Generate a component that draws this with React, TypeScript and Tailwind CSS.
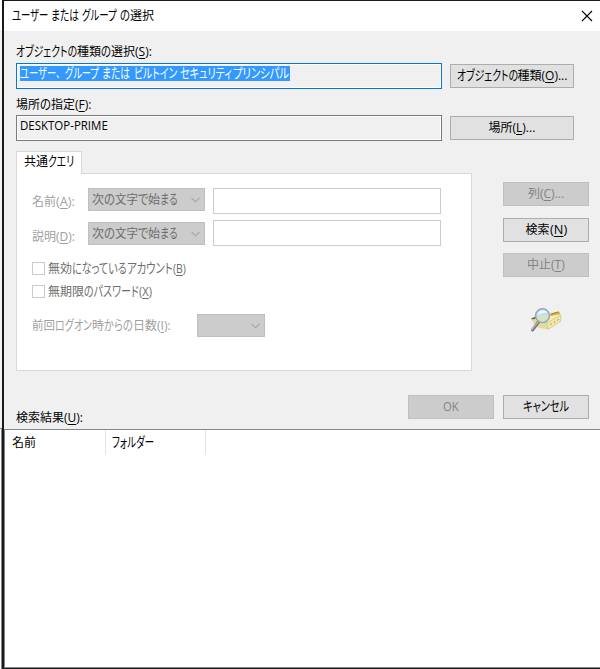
import { ReactNode, useLayoutEffect, useRef, useState } from "react";
import clsx from "clsx";

// a run of text squeezed to a fixed width, like the narrow kana of the Windows UI font
const Run = ({ w, className, children }: { w: number; className?: string; children: ReactNode }) => {
  const ref = useRef<HTMLSpanElement>(null);
  const [scale, setScale] = useState(1);

  useLayoutEffect(() => {
    if (ref.current) setScale(w / ref.current.offsetWidth);
  }, [w]);

  return (
    <span className="block h-4 shrink-0 whitespace-nowrap" style={{ width: w }}>
      <span ref={ref} className={clsx("block w-max origin-left", className ?? "leading-4")} style={{ transform: `scaleX(${scale})` }}>
        {children}
      </span>
    </span>
  );
};

type Part = [string, number];
type Key = [string, string, string, number];

const isKana = (text: string) => /^[ぁ-ヿ]+$/.test(text);

// parts are [text, width]; an empty text is a gap
const Text = ({ parts, accel, className }: { parts: Part[]; accel?: Key; className?: string }) => (
  <span className={clsx("flex h-4 items-center leading-4", className)}>
    {parts.map(([text, w], i) =>
      text
        ? <Run key={i} w={w} className={isKana(text) ? "text-[13.5px] leading-[15px] [font-feature-settings:'palt']" : undefined}>{text}</Run>
        : <span key={i} className="shrink-0" style={{ width: w }} />
    )}
    {accel && (
      <Run w={accel[3]}>
        {accel[0]}<u className="underline-offset-2">{accel[1]}</u>{accel[2]}
      </Run>
    )}
  </span>
);

const Button = ({ disabled, className, children }: { disabled?: boolean; className?: string; children: ReactNode }) => (
  <button
    disabled={disabled}
    className={clsx(
      "flex h-6 items-center justify-center border",
      disabled ? "border-[#bfbfbf] bg-[#cccccc] text-[#838383]" : "border-[#adadad] bg-[#e1e1e1] text-black",
      className
    )}
  >
    {children}
  </button>
);

const Select = ({ className, children }: { className?: string; children?: ReactNode }) => (
  <div className={clsx("flex h-[23px] items-center justify-between border border-[#bfbfbf] bg-[#cccccc] pl-[3px] pr-1 text-[#6d6d6d]", className)}>
    <span>{children}</span>
    <svg width="9" height="6" viewBox="0 0 9 6" fill="none" stroke="#a3a3a3" strokeWidth="1.1">
      <path d="M.5.8l4 4 4-4" />
    </svg>
  </div>
);

const Checkbox = ({ children }: { children: ReactNode }) => (
  <div className="flex h-[13px] items-center gap-[3px] text-[#6d6d6d]">
    <span className="size-[13px] border border-[#cccccc] bg-white" />
    {children}
  </div>
);

const startsWith: Part[] = [["次", 12], ["の", 11], ["文字", 23], ["で", 10], ["始", 12], ["まる", 18]];

const SearchIcon = () => (
  <svg width="34" height="28" viewBox="0 0 34 28">
    <path d="M2 13l16 4 1 6.500-12-2.500z" fill="#e6da96" />
    <path d="M2 12.500l15-6 15 2.500-14 8z" fill="#f5eebd" stroke="#cfc382" strokeWidth=".5" />
    <path d="M18 17l14-8-.5 6.500L19 23.500z" fill="#f0e7a8" stroke="#cbbd76" strokeWidth=".6" />
    <path d="M19 9l10-3 2 .5v1.500l-11 2.500z" fill="#dcae31" />
    <path d="M22 7.500l7-2 1.500.5-8 2.500z" fill="#a07c28" />
    <path d="M2 12.500l5-2v2l-3 1z" fill="#6f673f" />
    <path d="M21.500 18.500l1.200-.7M25 16.400l1.200-.7M28.500 14.200l1.200-.7" stroke="#8b7d44" strokeWidth="1" />
    <path d="M9.500 16L3.500 24" stroke="#74777c" strokeWidth="3" strokeLinecap="round" />
    <path d="M9 16l-6 7.500" stroke="#c3c7ca" strokeWidth="1.200" strokeLinecap="round" />
    <circle cx="13.500" cy="9.700" r="6.900" fill="#c3e0f0" stroke="#94a7ba" strokeWidth="1.400" />
    <path d="M8 11.500l11-2.500-.5 3.500-5 3-4-1.500z" fill="#dbe2b8" />
    <path d="M8.500 9c1-4.500 6.500-6 9.500-2.500-4 0-6 1-9.500 2.500z" fill="#f0f8fc" />
  </svg>
);

export default function App() {
  return (
    <main className="flex h-[669px] w-[600px] overflow-hidden bg-[#f0f0f0] font-['Open_Sans','Noto_Sans_CJK_JP',sans-serif] text-xs text-black">
      {/* edge of the window behind */}
      <div className="flex w-[2px] shrink-0 flex-col bg-[#f0f0f0]">
        <div className="h-[30px] bg-white" />
        <div className="h-[399px] border-b border-[#828790]" />
        <div className="grow border-r border-[#828790] bg-white" />
      </div>

      <div className="flex w-[598px] flex-col border-l-2 border-y border-[#1a1a1a]">
        <header className="flex h-[30px] shrink-0 items-center justify-between bg-white pl-2 pr-[7px]">
          <Text parts={[["ユーザー", 36], ["", 3], ["または", 28], ["", 3], ["グループ", 35], ["", 3], ["の", 10], ["選択", 24]]} />
          <svg width="12" height="12" viewBox="0 0 12 12" stroke="#000" strokeWidth="1.100">
            <path d="M1 1l10 10M11 1L1 11" />
          </svg>
        </header>

        <section className="flex h-[120px] shrink-0 gap-2 pl-3">
          <div className="w-[426px]">
            <Text className="mt-[13px]" parts={[["オブジェクトの", 61], ["種類", 24], ["の", 10], ["選択", 24]]} accel={["(", "S", "):", 17]} />
            <div className="mt-[3px] h-[26px] border border-[#0078d7] p-[3px] pt-0.5 shadow-[inset_0_0_0_1px_#fff]">
              <div className="flex h-[15px] w-[270px] items-center bg-[#3399ff] text-white">
                <Text parts={[["ユーザー", 36], ["、", 9], ["グループ", 34], ["", 3], ["または", 28], ["", 4], ["ビルトイン", 43], ["", 3], ["セキュリティ", 52], ["", 1], ["プリンシパル", 56]]} />
              </div>
            </div>
            <Text className="mt-2" parts={[["場所", 24], ["の", 11], ["指定", 24]]} accel={["(", "F", "):", 16]} />
            <div className="mt-0.5 h-[26px] border border-[#7a7a7a] px-[3px] pt-0.5 shadow-[inset_0_0_0_1px_#fff]">
              <Text parts={[["DESKTOP-PRIME", 88]]} />
            </div>
          </div>
          <div className="flex w-[124px] flex-col gap-7 pt-[33px]">
            <Button>
              <Text parts={[["オブジェクトの", 61], ["種類", 24]]} accel={["(", "O", ")...", 26]} />
            </Button>
            <Button>
              <Text parts={[["場所", 24]]} accel={["(", "L", ")...", 23]} />
            </Button>
          </div>
        </section>

        <section className="flex h-[220px] shrink-0 pl-3">
          <div className="w-[456px]">
            <div className="relative z-10 flex h-[23px] w-[66px] justify-center border border-b-0 border-[#d9d9d9] bg-white pt-0.5">
              <Text parts={[["共通", 24], ["クエリ", 26]]} />
            </div>
            <div className="-mt-px h-[198px] border border-[#d9d9d9] bg-white pl-[15px] pt-[14px]">
              <div className="flex h-[32px] items-start">
                <Text className="mt-1.5 w-14 text-[#a0a0a0]" parts={[["名前", 24]]} accel={["(", "A", "):", 19]} />
                <Select className="w-[117px]"><Text parts={startsWith} /></Select>
                <input disabled className="ml-2 h-[26px] w-[228px] border border-[#cccccc] bg-white" />
              </div>
              <div className="flex h-[42px] items-start">
                <Text className="mt-[9px] w-14 text-[#a0a0a0]" parts={[["説明", 24]]} accel={["(", "D", "):", 19]} />
                <Select className="mt-0.5 w-[117px]"><Text parts={startsWith} /></Select>
                <input disabled className="ml-2 h-[26px] w-[228px] border border-[#cccccc] bg-white" />
              </div>
              <div className="flex flex-col gap-2.5">
                <Checkbox>
                  <Text parts={[["無効", 24], ["になっている", 55], ["アカウント", 46]]} accel={["(", "B", ")", 13]} />
                </Checkbox>
                <Checkbox>
                  <Text parts={[["無期限", 36], ["のパスワード", 55]]} accel={["(", "X", ")", 13]} />
                </Checkbox>
              </div>
              <div className="mt-4 flex h-[23px] items-center">
                <Text className="w-[165px] text-[#a0a0a0]" parts={[["前回", 23], ["ログオン", 37], ["時", 12], ["からの", 29], ["日数", 24]]} accel={["(", "I", "):", 14]} />
                <Select className="w-[68px]" />
              </div>
            </div>
          </div>
          <div className="ml-[31px] flex w-[86px] flex-col pt-[31px]">
            <Button disabled>
              <Text parts={[["列", 12]]} accel={["(", "C", ")...", 24]} />
            </Button>
            <Button className="mt-3">
              <Text parts={[["検索", 24]]} accel={["(", "N", ")", 17]} />
            </Button>
            <Button disabled className="mt-[11px]">
              <Text parts={[["中止", 24]]} accel={["(", "T", ")", 14]} />
            </Button>
            <div className="mt-[29px] pl-[26px]"><SearchIcon /></div>
          </div>
        </section>

        <section className="flex h-[58px] shrink-0 pl-3">
          <Text className="mt-[39px] w-[392px]" parts={[["検索結果", 48]]} accel={["(", "U", "):", 19]} />
          <div className="flex gap-[9px] pt-6">
            <Button disabled className="w-[86px]"><Text parts={[["OK", 16]]} /></Button>
            <Button className="w-[86px]"><Text parts={[["キャンセル", 46]]} /></Button>
          </div>
        </section>

        <section className="grow border-y border-l border-[#828790] bg-white">
          <div className="flex h-[26px] items-start">
            <div className="flex h-[25px] w-[101px] items-center border-r border-[#e5e5e5] pl-[7px]">
              <Text parts={[["名前", 24]]} />
            </div>
            <div className="flex h-[25px] w-[100px] items-center border-r border-[#e5e5e5] pl-1.5">
              <Text parts={[["フォルダー", 42]]} />
            </div>
          </div>
        </section>
      </div>
    </main>
  );
}
